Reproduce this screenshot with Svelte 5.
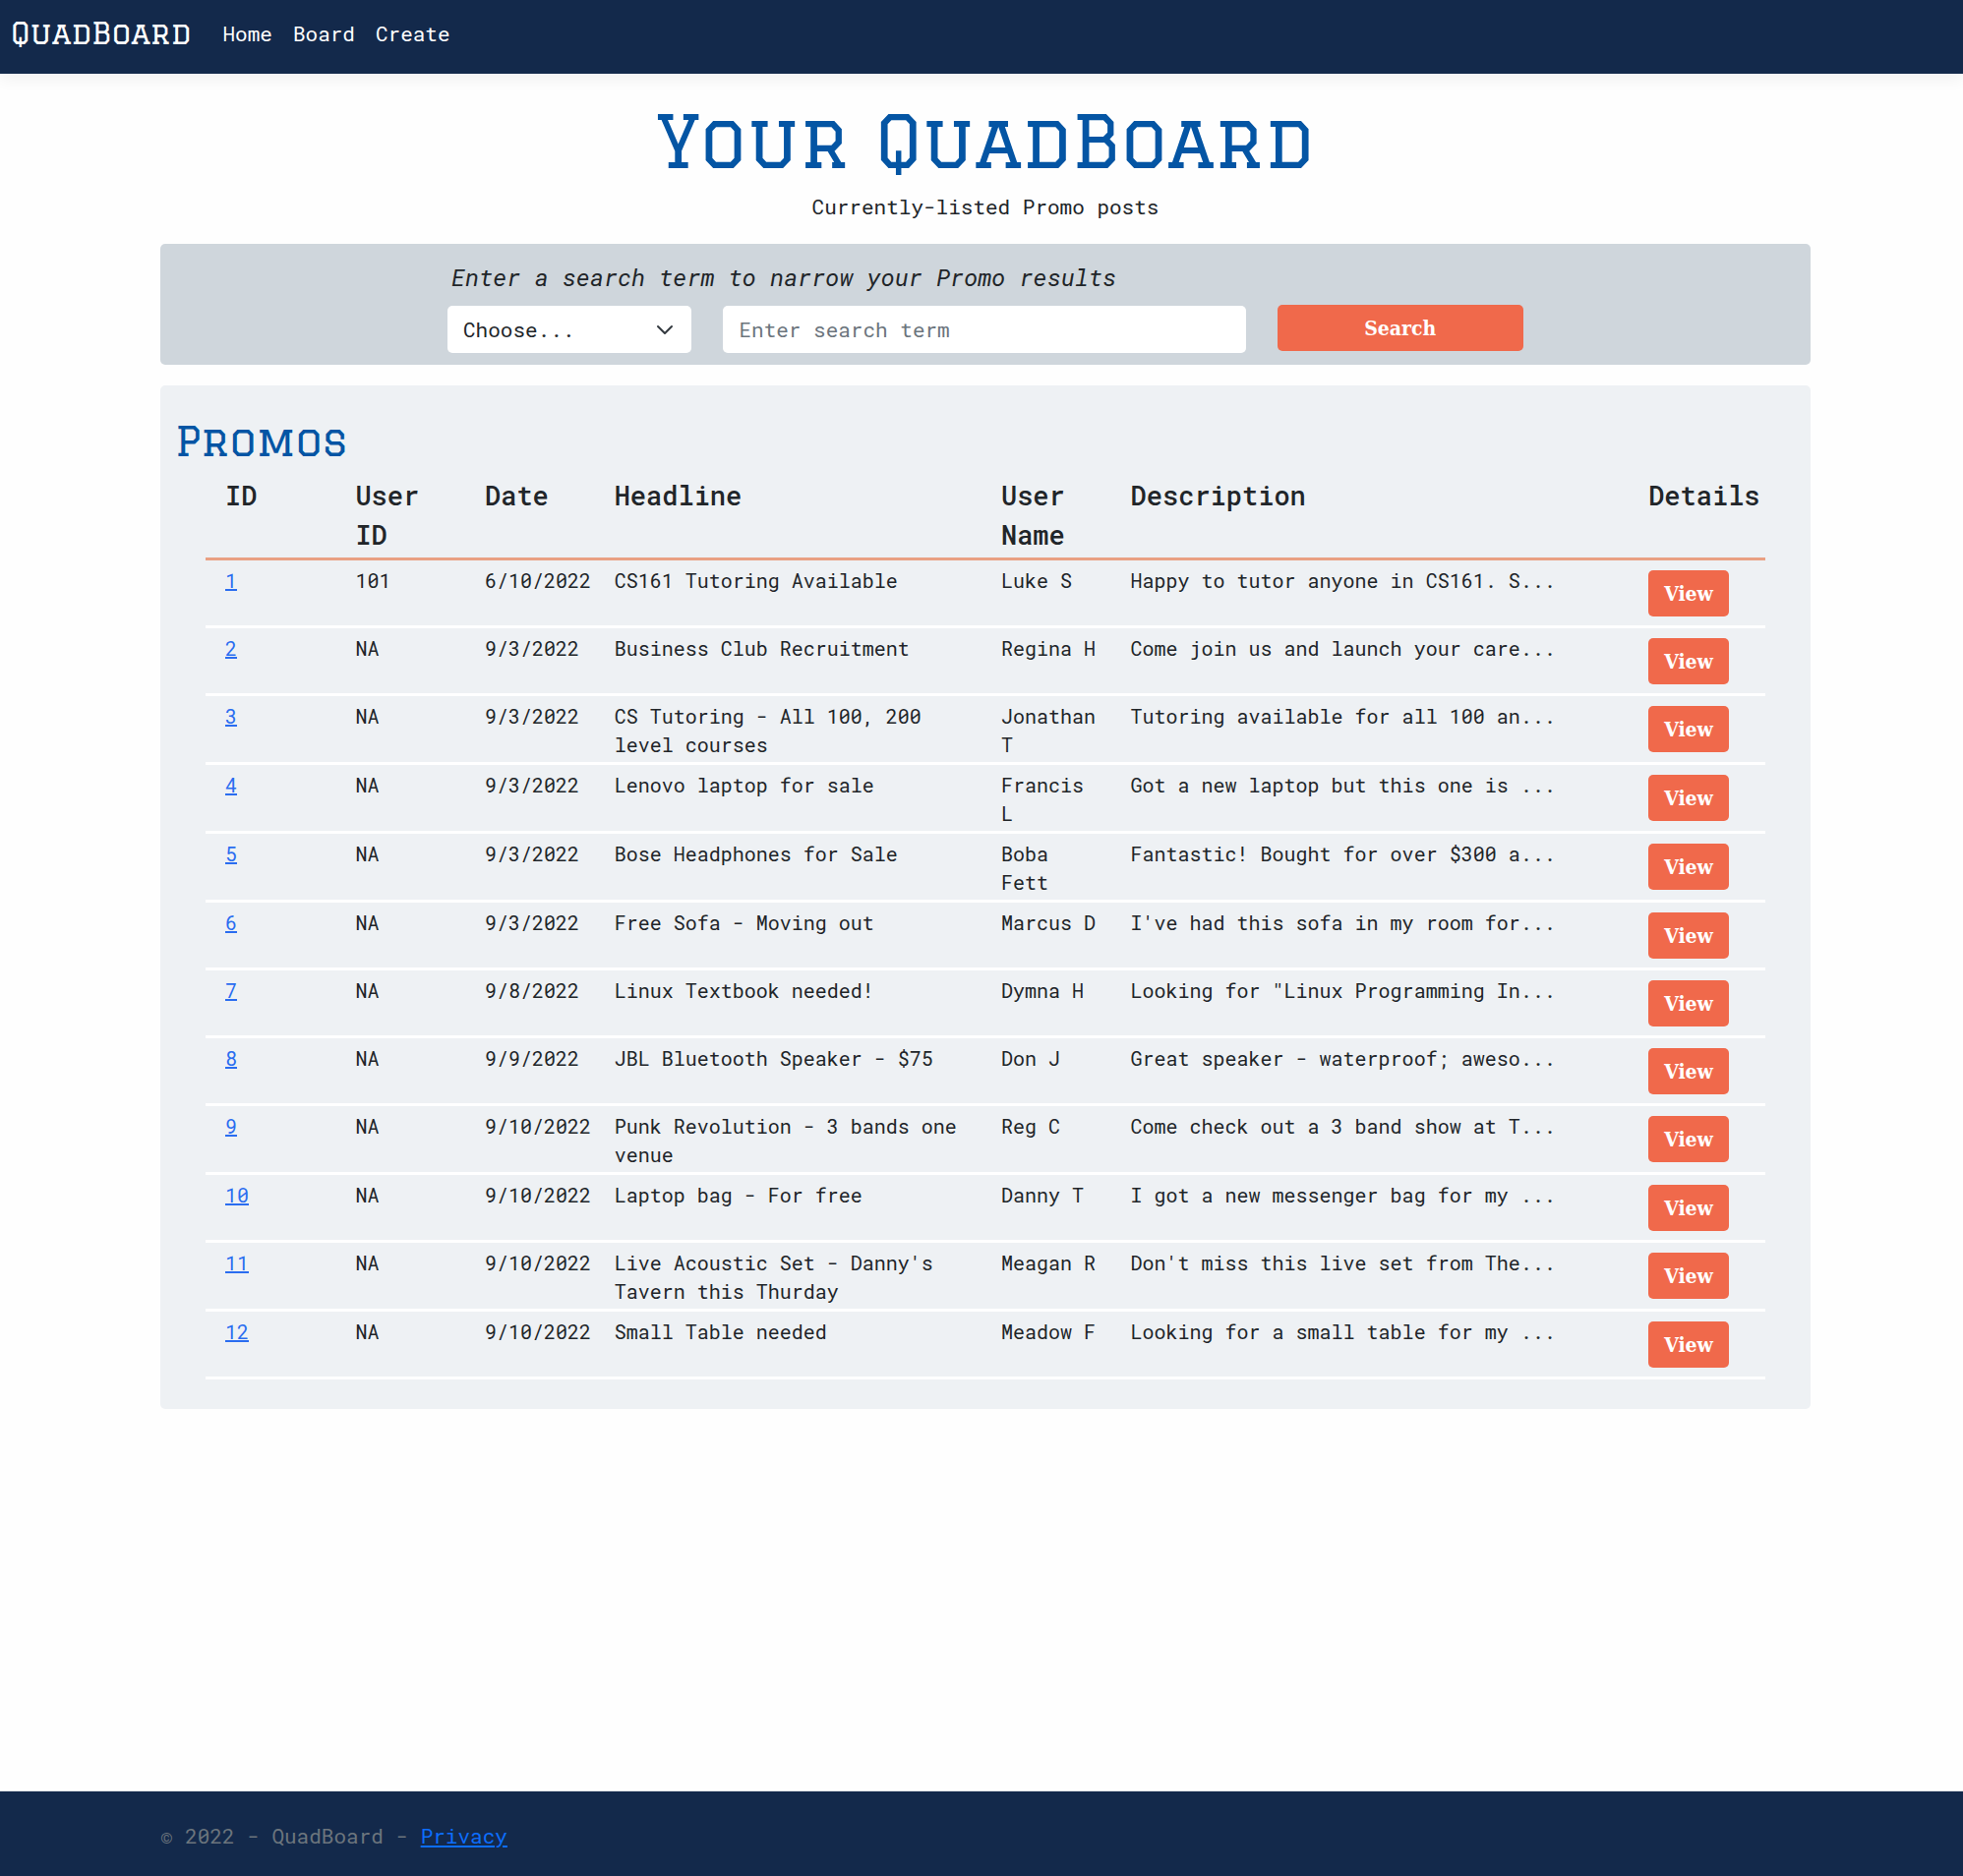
<script>
  const links = ['Home', 'Board', 'Create'];

  const promos = [
    { id: 1, user: '101', date: '6/10/2022', headline: 'CS161 Tutoring Available', name: 'Luke S', text: 'Happy to tutor anyone in CS161. S...' },
    { id: 2, user: 'NA', date: '9/3/2022', headline: 'Business Club Recruitment', name: 'Regina H', text: 'Come join us and launch your care...' },
    { id: 3, user: 'NA', date: '9/3/2022', headline: 'CS Tutoring - All 100, 200 level courses', name: 'Jonathan T', text: 'Tutoring available for all 100 an...' },
    { id: 4, user: 'NA', date: '9/3/2022', headline: 'Lenovo laptop for sale', name: 'Francis L', text: 'Got a new laptop but this one is ...' },
    { id: 5, user: 'NA', date: '9/3/2022', headline: 'Bose Headphones for Sale', name: 'Boba Fett', text: 'Fantastic! Bought for over $300 a...' },
    { id: 6, user: 'NA', date: '9/3/2022', headline: 'Free Sofa - Moving out', name: 'Marcus D', text: "I've had this sofa in my room for..." },
    { id: 7, user: 'NA', date: '9/8/2022', headline: 'Linux Textbook needed!', name: 'Dymna H', text: 'Looking for "Linux Programming In...' },
    { id: 8, user: 'NA', date: '9/9/2022', headline: 'JBL Bluetooth Speaker - $75', name: 'Don J', text: 'Great speaker - waterproof; aweso...' },
    { id: 9, user: 'NA', date: '9/10/2022', headline: 'Punk Revolution - 3 bands one venue', name: 'Reg C', text: 'Come check out a 3 band show at T...' },
    { id: 10, user: 'NA', date: '9/10/2022', headline: 'Laptop bag - For free', name: 'Danny T', text: 'I got a new messenger bag for my ...' },
    { id: 11, user: 'NA', date: '9/10/2022', headline: "Live Acoustic Set - Danny's Tavern this Thurday", name: 'Meagan R', text: "Don't miss this live set from The..." },
    { id: 12, user: 'NA', date: '9/10/2022', headline: 'Small Table needed', name: 'Meadow F', text: 'Looking for a small table for my ...' }
  ];

  let term = $state('');
  let field = $state('');
</script>

<div class="page">
  <header>
    <nav>
      <a class="brand slab" href="#home">QuadBoard</a>
      <ul>
        {#each links as link}
          <li><a href="#{link.toLowerCase()}">{link}</a></li>
        {/each}
      </ul>
    </nav>
  </header>

  <main>
    <h1 class="slab">Your QuadBoard</h1>
    <p class="lead">Currently-listed Promo posts</p>

    <section class="search">
      <form onsubmit={(e) => e.preventDefault()}>
        <label class="hint" for="term">Enter a search term to narrow your Promo results</label>
        <div class="select">
          <select bind:value={field} aria-label="Search field">
            <option value="">Choose...</option>
            <option value="headline">Headline</option>
            <option value="name">User Name</option>
          </select>
          <svg viewBox="0 0 20 20" width="20" height="20" aria-hidden="true">
            <path d="M3 7l7 7 7-7" fill="none" stroke="#343a40" stroke-width="2" stroke-linecap="round" stroke-linejoin="round" />
          </svg>
        </div>
        <input id="term" type="text" placeholder="Enter search term" bind:value={term} />
        <button type="submit">Search</button>
      </form>
    </section>

    <section class="promos">
      <h2 class="slab">Promos</h2>
      <table>
        <colgroup>
          <col class="c-id" /><col class="c-sm" /><col class="c-sm" /><col class="c-head" />
          <col class="c-sm" /><col class="c-desc" /><col />
        </colgroup>
        <thead>
          <tr>
            <th>ID</th>
            <th>User ID</th>
            <th>Date</th>
            <th>Headline</th>
            <th>User Name</th>
            <th>Description</th>
            <th>Details</th>
          </tr>
        </thead>
        <tbody>
          {#each promos as p (p.id)}
            <tr>
              <td><a href="#promo-{p.id}">{p.id}</a></td>
              <td>{p.user}</td>
              <td>{p.date}</td>
              <td>{p.headline}</td>
              <td>{p.name}</td>
              <td>{p.text}</td>
              <td class="action"><button type="button">View</button></td>
            </tr>
          {/each}
        </tbody>
      </table>
    </section>
  </main>

  <footer>© 2022 - QuadBoard - <a href="#privacy">Privacy</a></footer>
</div>

<style>
  :global(body) {
    margin: 0;
    background: #fefefe;
  }
  .page {
    min-height: 100vh;
    display: flex;
    flex-direction: column;
    box-sizing: border-box;
    color: #212529;
    font-family: 'Roboto Mono', 'Liberation Mono', monospace;
    font-size: 21px;
    font-weight: 400;
    line-height: 32px;
  }
  .slab {
    font-family: Graduate, 'DejaVu Serif', serif;
    font-weight: 400;
  }

  header {
    background: #13294b;
    box-shadow: 0 5px 16px rgba(0, 0, 0, 0.06);
  }
  nav {
    display: flex;
    align-items: center;
    height: 75px;
    padding: 0 11px 7px;
    box-sizing: border-box;
  }
  .brand {
    color: #fff;
    text-decoration: none;
    font-size: 30px;
    margin-right: 32px;
  }
  ul {
    display: flex;
    gap: 21px;
    margin: 0;
    padding: 0;
    list-style: none;
  }
  li a {
    color: #fff;
    text-decoration: none;
  }

  main {
    padding: 0 155px 40px 163px;
  }
  h1 {
    margin: 23px 0 0;
    font-size: 73px;
    line-height: 90px;
    color: #0455a4;
    text-align: center;
  }
  .lead {
    margin: 6px 0 22px;
    text-align: center;
  }

  section {
    border-radius: 5px;
  }
  .search {
    background: #cfd6dc;
    padding: 16px 0 12px;
    margin-bottom: 21px;
  }
  form {
    width: 65.2%;
    margin: 0 auto;
    display: grid;
    grid-template-columns: 248fr 530fr 250fr;
    column-gap: 32px;
    row-gap: 10px;
  }
  .hint {
    grid-column: 1 / -1;
    padding-left: 4px;
    font-size: 24px;
    line-height: 36px;
    font-style: italic;
  }
  .select {
    display: grid;
    align-items: center;
  }
  .select select,
  .select svg {
    grid-area: 1 / 1;
  }
  .select svg {
    justify-self: end;
    margin-right: 17px;
    pointer-events: none;
  }
  select,
  input {
    appearance: none;
    box-sizing: border-box;
    width: 100%;
    height: 48px;
    margin: 1px 0 0;
    padding: 0 16px;
    border: 0;
    border-radius: 5px;
    background: #fff;
    color: #212529;
    font: inherit;
  }
  input::placeholder {
    color: #6c757d;
    opacity: 1;
  }
  button {
    height: 47px;
    border: 0;
    border-radius: 5px;
    background: #f0694b;
    color: #fff;
    font-family: 'Roboto Slab', 'DejaVu Serif Condensed', 'DejaVu Serif', serif;
    font-stretch: condensed;
    font-weight: 700;
    font-size: 21px;
    line-height: 32px;
    cursor: pointer;
  }

  .promos {
    background: #eef1f4;
    padding: 30px 46px;
  }
  h2 {
    margin: 0 0 10px -31px;
    font-size: 42px;
    line-height: 52px;
    color: #0455a4;
  }
  table {
    width: 100%;
    table-layout: fixed;
    border-spacing: 0;
    font-size: 20px;
    line-height: 29px;
  }
  .c-id {
    width: 8.6%;
  }
  .c-sm {
    width: 8.3%;
  }
  .c-head {
    width: 24.8%;
  }
  .c-desc {
    width: 33.2%;
  }
  th,
  td {
    padding: 6px 16px 3px;
    text-align: left;
    vertical-align: top;
    border-bottom: 3px solid #fff;
  }
  th {
    padding: 0 16px 3px;
    border-bottom-color: #e9a083;
    font-size: 27px;
    font-weight: 500;
    line-height: 40px;
  }
  th:first-child,
  td:first-child {
    padding-left: 20px;
  }
  th:last-child {
    padding-right: 0;
  }
  td a {
    color: #2a6df0;
  }
  .action {
    padding-top: 10px;
    padding-bottom: 9px;
  }
  .action button {
    display: block;
    padding: 0 16px;
  }

  footer {
    margin-top: auto;
    padding: 29px 163px 25px;
    border-top: 1px solid #dee2e6;
    background: #13294b;
    color: #6c757d;
  }
  footer a {
    color: #0d6efd;
  }
</style>
